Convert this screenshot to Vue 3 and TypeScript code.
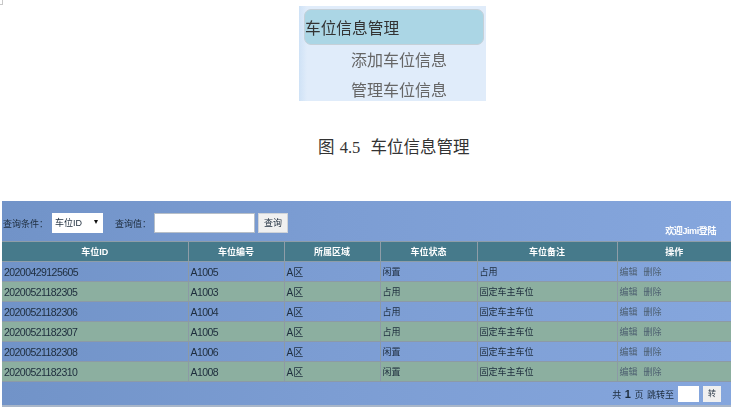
<script setup lang="ts">
interface Spot {
  id: string;
  code: string;
  area: string;
  status: string;
  note: string;
}

const heads = ["车位ID", "车位编号", "所属区域", "车位状态", "车位备注", "操作"];

const spots: Spot[] = [
  { id: "20200429125605", code: "A1005", area: "A区", status: "闲置", note: "占用" },
  { id: "20200521182305", code: "A1003", area: "A区", status: "占用", note: "固定车主车位" },
  { id: "20200521182306", code: "A1004", area: "A区", status: "占用", note: "固定车主车位" },
  { id: "20200521182307", code: "A1005", area: "A区", status: "占用", note: "固定车主车位" },
  { id: "20200521182308", code: "A1006", area: "A区", status: "闲置", note: "固定车主车位" },
  { id: "20200521182310", code: "A1008", area: "A区", status: "闲置", note: "固定车主车位" },
];
</script>

<template>
  <div class="page">
    <div class="corner"></div>

    <div class="figure">
      <div class="menu">
        <div class="menu-title">车位信息管理</div>
        <div class="menu-item">添加车位信息</div>
        <div class="menu-item">管理车位信息</div>
      </div>
      <p class="caption">图 4.5&nbsp; 车位信息管理</p>
    </div>

    <div class="panel">
      <div class="toolbar">
        <div class="search">
          <span>查询条件：</span>
          <div class="select">车位ID<i class="arrow"></i></div>
          <span class="value-label">查询值：</span>
          <div class="input"></div>
          <div class="btn">查询</div>
        </div>
        <div class="welcome">欢迎Jimi登陆</div>
      </div>

      <table class="grid">
        <colgroup>
          <col style="width: 186px" />
          <col style="width: 96px" />
          <col style="width: 96px" />
          <col style="width: 97px" />
          <col style="width: 140px" />
          <col />
        </colgroup>
        <thead>
          <tr>
            <th v-for="h in heads" :key="h">{{ h }}</th>
          </tr>
        </thead>
        <tbody>
          <tr v-for="s in spots" :key="s.id">
            <td class="num">{{ s.id }}</td>
            <td class="num">{{ s.code }}</td>
            <td class="area">{{ s.area }}</td>
            <td>{{ s.status }}</td>
            <td>{{ s.note }}</td>
            <td class="ops"><a>编辑</a><a>删除</a></td>
          </tr>
        </tbody>
      </table>

      <div class="pager">
        <span>共 <b>1</b> 页 跳转至</span>
        <div class="page-input"></div>
        <div class="go">转</div>
      </div>
    </div>
  </div>
</template>

<style scoped>
.page {
  width: 749px;
  height: 416px;
  overflow: hidden;
  background: #fff;
  font-family: "Liberation Sans", "Noto Sans CJK SC", sans-serif;
}
.corner {
  width: 3px;
  height: 5px;
  border-right: 1px solid #c8c8c8;
  border-bottom: 1px solid #c8c8c8;
  box-sizing: border-box;
}
.figure {
  height: 196px;
  padding-top: 1px;
  box-sizing: border-box;
}
.menu {
  width: 187px;
  height: 95px;
  margin-left: 299px;
  padding: 3px 2px 0 5px;
  box-sizing: border-box;
  background: linear-gradient(90deg, #cfe2f6 0, #e0ecfa 8px);
  overflow: hidden;
}
.menu-title {
  height: 36px;
  line-height: 37px;
  background: #abd6e5;
  border: 1px solid #c5d0d8;
  border-radius: 7px;
  box-sizing: border-box;
  font-size: 15.7px;
  color: #333;
  filter: blur(0.4px);
}
.menu-item {
  height: 30px;
  line-height: 30px;
  padding-left: 47px;
  font-size: 16px;
  color: #666;
  filter: blur(0.4px);
}
.menu-title + .menu-item {
  margin-top: 1px;
}
.caption {
  margin: 37px 0 0 318px;
  font-family: "Liberation Serif", "Noto Sans CJK SC", serif;
  font-size: 16.5px;
  line-height: 20px;
  word-spacing: 1px;
  color: #333;
}
.panel {
  width: 729px;
  height: 206px;
  margin-left: 2px;
  background: linear-gradient(90deg, #7193c8 0, #7c9dd3 45%, #85a6dd 100%);
  border-bottom: 2px solid #a9b6c8;
  box-sizing: border-box;
  font-size: 9px;
  color: #1d2c3c;
  filter: blur(0.4px);
}
.toolbar {
  height: 40px;
  padding: 12px 15px 0 1px;
  box-sizing: border-box;
  display: flex;
  justify-content: space-between;
}
.search {
  display: flex;
  align-items: center;
  height: 20px;
}
.select {
  position: relative;
  width: 51px;
  height: 20px;
  line-height: 20px;
  padding-left: 3px;
  margin-left: 4px;
  box-sizing: border-box;
  background: #fff;
}
.arrow {
  position: absolute;
  right: 5px;
  top: 7px;
  border-left: 2.5px solid transparent;
  border-right: 2.5px solid transparent;
  border-top: 4px solid #111;
}
.value-label {
  margin-left: 12px;
}
.input {
  width: 101px;
  height: 20px;
  margin-left: 3px;
  background: #fff;
  border: 1px solid #b7bfc8;
  box-sizing: border-box;
}
.btn {
  width: 30px;
  height: 20px;
  line-height: 19px;
  margin-left: 3px;
  text-align: center;
  background: #f0f0f0;
  border: 1px solid #cfd3d8;
  box-sizing: border-box;
}
.welcome {
  align-self: flex-end;
  margin-bottom: 4px;
  color: #fff;
  font-weight: bold;
  letter-spacing: -0.4px;
}
.grid {
  width: 100%;
  border-collapse: collapse;
  table-layout: fixed;
}
.grid th {
  height: 19px;
  padding: 0;
  background: #467a8b;
  color: #fff;
  font-weight: bold;
  border: 1px solid #8e9da8;
}
.grid td {
  height: 19px;
  padding: 0 0 0 2px;
  border: 1px solid #8c9aa6;
  white-space: nowrap;
}
.grid td.num {
  font-size: 10.5px;
  letter-spacing: -0.55px;
}
.grid td.area {
  font-size: 10px;
}
.grid th:first-child,
.grid td:first-child {
  border-left: 0;
}
.grid th:last-child,
.grid td:last-child {
  border-right: 0;
}
.grid tbody tr:nth-child(even) td {
  background: #8cafa0;
}
.ops a {
  color: #4d5f70;
  margin-right: 6px;
}
.pager {
  height: 22px;
  margin-top: 1px;
  padding-right: 10px;
  display: flex;
  align-items: center;
  justify-content: flex-end;
  word-spacing: 1px;
}
.pager b {
  font-size: 11px;
}
.page-input {
  width: 21px;
  height: 16px;
  margin-left: 4px;
  background: #fff;
}
.go {
  width: 18px;
  height: 16px;
  line-height: 16px;
  margin-left: 4px;
  text-align: center;
  background: #f0f0f0;
  font-size: 8px;
}
</style>
